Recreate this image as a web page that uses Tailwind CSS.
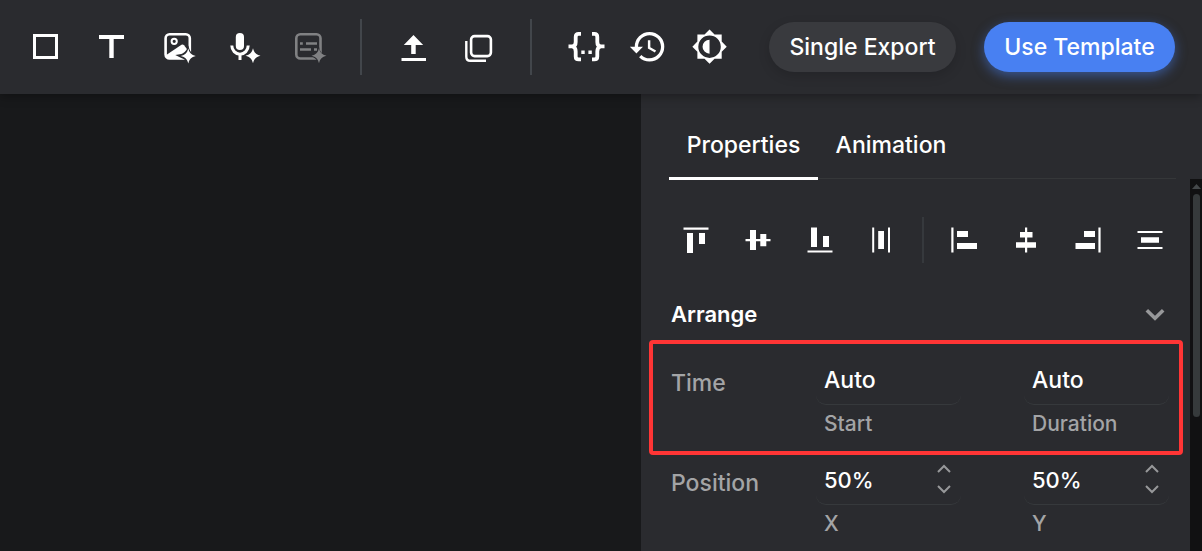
<!DOCTYPE html>
<html lang="en">
<head>
<meta charset="utf-8">
<meta name="viewport" content="width=device-width, initial-scale=1">
<title>Template Editor</title>
<script src="https://cdn.jsdelivr.net/npm/@tailwindcss/browser@4"></script>
</head>
<body class="flex h-screen flex-col overflow-hidden bg-[#18191b] font-['Inter',sans-serif] font-medium text-white">

<svg class="hidden" aria-hidden="true">
  <symbol id="sparkle" viewBox="-8 -8 16 16">
    <path d="M0-7.5C1.2-3 3-1.2 7.500 0 3 1.200 1.200 3 0 7.500-1.200 3-3 1.200-7.500 0-3-1.200-1.200-3 0-7.500Z"/>
  </symbol>
</svg>

<header class="relative z-10 flex h-[94px] shrink-0 items-center bg-[#2a2b2f] pr-[27px] pl-3 shadow-[0_2px_10px_rgba(0,0,0,0.35)]">
  <div class="flex">
    <button aria-label="Shape" class="flex h-15 w-[66px] items-center justify-center">
      <svg class="size-10" viewBox="25 27 40 40" fill="none" stroke="currentColor" stroke-width="3"><rect x="34.500" y="35.500" width="22" height="22"/></svg>
    </button>
    <button aria-label="Text" class="flex h-15 w-[66px] items-center justify-center">
      <svg class="size-10" viewBox="91 27 40 40" fill="currentColor"><path d="M99 35h25v4h-10.300v19h-4.400V39H99z"/></svg>
    </button>
    <button aria-label="AI image" class="flex h-15 w-[66px] items-center justify-center">
      <svg class="size-10" viewBox="157 27 40 40" fill="none" stroke="currentColor" stroke-width="2.600">
        <rect x="165.600" y="34.300" width="24.200" height="24.200" rx="4"/>
        <circle cx="174.200" cy="41.300" r="2.600" stroke-width="2"/>
        <path d="M165.500 55.500 181.500 44.800q1.500-.8 2.500.5l5 6.500-1 7H168.500q-3 0-3-3.300Z" fill="currentColor" stroke="none"/>
        <path d="M188.300 45.500c1.500 6 3 8 9 10.500-6 2-7.500 4-9 9.500-1.500-4.500-3.500-6.500-7-7.500l-6-3 6-1c3.500-1.500 5.500-3.500 7-8.500Z" fill="#2a2b2f" stroke="none"/>
        <use href="#sparkle" x="180.300" y="48" width="16" height="16" fill="currentColor" stroke="none"/>
      </svg>
    </button>
    <button aria-label="AI voice" class="flex h-15 w-[66px] items-center justify-center">
      <svg class="size-10" viewBox="223 27 40 40" fill="none" stroke="currentColor" stroke-width="2.600">
        <rect x="235.800" y="33" width="8.200" height="17" rx="4.100" fill="currentColor" stroke="none"/>
        <path d="M231.800 45.500a8.200 8.700 0 0 0 16.400 0M240 54v6" stroke-width="3"/>
        <use href="#sparkle" x="245" y="47.700" width="16" height="16" fill="currentColor" stroke="#2a2b2f" stroke-width="2.400" paint-order="stroke"/>
      </svg>
    </button>
    <button aria-label="AI subtitles" disabled class="flex h-15 w-[66px] items-center justify-center text-[#808183]">
      <svg class="size-10" viewBox="289 27 40 40" fill="none" stroke="currentColor" stroke-width="2.600">
        <rect x="296.300" y="34.300" width="24.200" height="24.200" rx="4"/>
        <path d="M300 43.500h2.800M306 43.500h11M300 49.500h11M314 49.500h3"/>
        <path d="M319 47c1.200 5.500 3 7.500 9 9-6 2-7.500 4-9 9.500-1.500-5.500-3-7.500-9-9.500 6-1.500 7.500-3.500 9-9Z" fill="#2a2b2f" stroke="none"/>
        <use href="#sparkle" x="311" y="47.800" width="16" height="16" fill="currentColor" stroke="none"/>
      </svg>
    </button>
  </div>
  <div class="mx-[18px] h-14 w-0.5 bg-[#42464b]"></div>
  <div class="flex">
    <button aria-label="Upload" class="flex h-15 w-[66px] items-center justify-center">
      <svg class="size-10" viewBox="393 27 40 40" fill="currentColor"><path d="M413.500 35 423.200 45H415.700v9h-4.500v-9h-7.400ZM401.500 58h24.500v3h-24.500z"/></svg>
    </button>
    <button aria-label="Duplicate" class="flex h-15 w-[66px] items-center justify-center">
      <svg class="size-10" viewBox="459 27 40 40" fill="none" stroke="currentColor" stroke-width="2.600"><rect x="471.100" y="36.100" width="19.800" height="20" rx="3.500"/><path d="M466.300 41v15.800q0 4 4 4H486" stroke-width="2.400"/></svg>
    </button>
  </div>
  <div class="ml-[18px] mr-6 h-14 w-0.5 bg-[#42464b]"></div>
  <div class="flex">
    <button aria-label="Edit JSON" class="flex h-15 w-[62px] items-center justify-center">
      <svg class="size-10" viewBox="567 27 40 40" fill="none" stroke="currentColor" stroke-width="3.800">
        <path d="M581 33.900h-2.300q-3 0-3 3v5q0 4-3.200 4.500H568.500M581 59.400h-2.300q-3 0-3-3v-5q0-4-3.200-4.900M592 33.900h2.300q3 0 3 3v5q0 4 3.200 4.500H604.500M592 59.400h2.300q3 0 3-3v-5q0-4 3.200-4.900"/>
        <path d="M581.300 50.500h3.400v3.400h-3.400zM588.400 50.500h3.400v3.400h-3.400z" fill="currentColor" stroke="none"/>
      </svg>
    </button>
    <button aria-label="History" class="flex h-15 w-[62px] items-center justify-center">
      <svg class="size-10" viewBox="629 27 40 40" fill="currentColor"><path transform="translate(628.200 27.100) scale(1.640)" d="M13 3a9 9 0 0 0-9 9H1l3.890 3.890.07.14L9 12H6c0-3.870 3.130-7 7-7s7 3.130 7 7-3.130 7-7 7c-1.930 0-3.680-.79-4.940-2.060l-1.420 1.420A8.954 8.954 0 0 0 13 21a9 9 0 0 0 0-18zm-1 5v5l4.280 2.540.72-1.210-3.500-2.080V8H12z"/></svg>
    </button>
    <button aria-label="Theme" class="flex h-15 w-[62px] items-center justify-center">
      <svg class="size-10" viewBox="691 27 40 40" fill="currentColor"><g transform="translate(691.300 28.400) scale(1.520)"><path fill-rule="evenodd" d="M20 15.310 23.310 12 20 8.690V4h-4.690L12 .69 8.690 4H4v4.690L.69 12 4 15.310V20h4.690L12 23.310 15.310 20H20zM12 4.600a7.400 7.400 0 1 1 0 14.800 7.400 7.400 0 0 1 0-14.800Z"/><path d="M12 7.400v9.200a4.600 4.600 0 0 1 0-9.200Z"/></g></svg>
    </button>
  </div>
  <div class="ml-auto flex gap-7">
    <button class="h-[50px] w-[187px] rounded-full bg-[#393a3e] text-[23px] whitespace-nowrap shadow-[0_4px_12px_rgba(0,0,0,0.15)]">Single Export</button>
    <button class="h-[50px] w-[191px] rounded-full bg-[#4880f2] text-[23px] whitespace-nowrap shadow-[0_4px_12px_rgba(72,128,242,0.5)]">Use Template</button>
  </div>
</header>

<div class="flex min-h-0 flex-1">
  <main aria-label="Canvas" class="flex-1 bg-[#18191b]"></main>

  <aside class="flex w-[561px] shrink-0 flex-col bg-[#2a2b2f]">
    <div class="pr-[26px] pl-7">
      <div role="tablist" class="flex h-[85px] border-b border-[#353739]">
        <button role="tab" aria-selected="true" class="-mb-0.5 w-[149px] shrink-0 border-b-3 border-white pt-[19px] text-[23px]">Properties</button>
        <button role="tab" aria-selected="false" class="-mb-0.5 w-[146px] shrink-0 border-b-3 border-transparent pt-[19px] text-[23px]">Animation</button>
      </div>
    </div>

    <div class="flex min-h-0 flex-1">
      <div class="min-w-0 flex-1 overflow-hidden">
        <div class="mt-[38px] flex h-[46px] items-center pl-6">
          <button aria-label="Align top" class="flex w-[62px] justify-center"><svg class="h-8 w-8" viewBox="680 224 32 32" fill="currentColor"><path d="M683.500 227.500h25v2.200h-25zM687 233h6v20h-6zM699 233h6v11h-6z"/></svg></button>
          <button aria-label="Align middle" class="flex w-[62px] justify-center"><svg class="h-8 w-8" viewBox="742 224 32 32" fill="currentColor"><path d="M745.500 239h25v2.200h-25zM750 230h6v20h-6zM760.300 234h6v12.300h-6z"/></svg></button>
          <button aria-label="Align bottom" class="flex w-[62px] justify-center"><svg class="h-8 w-8" viewBox="804 224 32 32" fill="currentColor"><path d="M807.500 250.400h25v2.200h-25zM811 227.500h6V247h-6zM823 236h6v11h-6z"/></svg></button>
          <button aria-label="Distribute horizontally" class="flex w-[62px] justify-center"><svg class="h-8 w-8" viewBox="866 224 32 32" fill="currentColor"><path d="M872.200 227.500h2v25h-2zM888 227.500h2v25h-2zM878.200 231h5.800v18h-5.800z"/></svg></button>
          <div class="mx-[9px] h-full w-0.5 bg-[#36393d]"></div>
          <button aria-label="Align left" class="flex w-[62px] justify-center"><svg class="h-8 w-8" viewBox="948 224 32 32" fill="currentColor"><path d="M951.300 227.500h2.200v25h-2.200zM957 231h11v6h-11zM957 243h20v6h-20z"/></svg></button>
          <button aria-label="Align center" class="flex w-[62px] justify-center"><svg class="h-8 w-8" viewBox="1010 224 32 32" fill="currentColor"><path d="M1025 227.500h2.200v25h-2.200zM1020 232h12.500v5.500H1020zM1016 242.200h20v5.600h-20z"/></svg></button>
          <button aria-label="Align right" class="flex w-[62px] justify-center"><svg class="h-8 w-8" viewBox="1072 224 32 32" fill="currentColor"><path d="M1098.400 227.500h2.200v25h-2.200zM1084 231h11v6h-11zM1075.500 243H1095v6h-19.500z"/></svg></button>
          <button aria-label="Distribute vertically" class="flex w-[62px] justify-center"><svg class="h-8 w-8" viewBox="1134 224 32 32" fill="currentColor"><path d="M1137.500 231h25v2h-25zM1137.500 247h25v2h-25zM1141 237.200h18v5.600h-18z"/></svg></button>
        </div>

        <button aria-expanded="true" class="mt-[25px] flex h-[52px] w-full items-center justify-between pr-6 pl-[30px] text-[22px] font-semibold">
          Arrange
          <svg class="h-4 w-[22px] text-[#97989a]" viewBox="0 0 22 16" fill="none" stroke="currentColor" stroke-width="3.600"><path d="m2.800 4.300 8.200 8 8.200-8"/></svg>
        </button>

        <div class="mr-[7px] ml-2 flex rounded border-4 border-[#ff3535] pt-3 pr-2.5 pb-[9px] pl-[18px]">
          <span class="w-[145px] shrink-0 pt-[3px] text-[23px] leading-[49px] text-[#a3a4a6]">Time</span>
          <div class="grid flex-1 grid-cols-2 gap-[63px]">
            <div>
              <input id="start" value="Auto" class="block h-[49px] w-full rounded-[10px] border-b border-[#36393c] bg-transparent px-2 text-[23px]">
              <label for="start" class="block pl-2 text-[21px] leading-[37px] text-[#a3a4a6]">Start</label>
            </div>
            <div>
              <input id="duration" value="Auto" class="block h-[49px] w-full rounded-[10px] border-b border-[#36393c] bg-transparent px-2 text-[23px]">
              <label for="duration" class="block pl-2 text-[21px] leading-[37px] text-[#a3a4a6]">Duration</label>
            </div>
          </div>
        </div>

        <div class="mt-px flex pr-[21px] pl-[30px]">
          <span class="w-[145px] shrink-0 pt-[3px] text-[23px] leading-[49px] text-[#a3a4a6]">Position</span>
          <div class="grid flex-1 grid-cols-2 gap-[63px]">
            <div>
              <div class="flex h-[49px] rounded-[10px] border-b border-[#36393c] pr-[9px] pl-2">
                <input id="pos-x" value="50%" class="min-w-0 flex-1 bg-transparent text-[22px]">
                <div class="flex flex-col justify-center gap-1 pb-0.5 text-[#97989a]">
                  <button aria-label="Increase X"><svg class="h-4 w-4" viewBox="0 0 16 16" fill="none" stroke="currentColor" stroke-width="2"><path d="m2 11 6-6 6 6"/></svg></button>
                  <button aria-label="Decrease X"><svg class="h-4 w-4" viewBox="0 0 16 16" fill="none" stroke="currentColor" stroke-width="2"><path d="m2 5 6 6 6-6"/></svg></button>
                </div>
              </div>
              <label for="pos-x" class="block pl-2 text-[21px] leading-[37px] text-[#a3a4a6]">X</label>
            </div>
            <div>
              <div class="flex h-[49px] rounded-[10px] border-b border-[#36393c] pr-[9px] pl-2">
                <input id="pos-y" value="50%" class="min-w-0 flex-1 bg-transparent text-[22px]">
                <div class="flex flex-col justify-center gap-1 pb-0.5 text-[#97989a]">
                  <button aria-label="Increase Y"><svg class="h-4 w-4" viewBox="0 0 16 16" fill="none" stroke="currentColor" stroke-width="2"><path d="m2 11 6-6 6 6"/></svg></button>
                  <button aria-label="Decrease Y"><svg class="h-4 w-4" viewBox="0 0 16 16" fill="none" stroke="currentColor" stroke-width="2"><path d="m2 5 6 6 6-6"/></svg></button>
                </div>
              </div>
              <label for="pos-y" class="block pl-2 text-[21px] leading-[37px] text-[#a3a4a6]">Y</label>
            </div>
          </div>
        </div>
      </div>

      <div class="flex w-3 shrink-0 flex-col items-center bg-[#111112] pl-px">
        <svg class="mt-[5px] h-[5px] w-[9px] text-[#45494b]" viewBox="0 0 9 5" fill="currentColor"><path d="M4.500 0 9 5H0z"/></svg>
        <div class="mt-[5px] h-[223px] w-[7px] rounded-full bg-[#363a3b]"></div>
      </div>
    </div>
  </aside>
</div>
</body>
</html>
